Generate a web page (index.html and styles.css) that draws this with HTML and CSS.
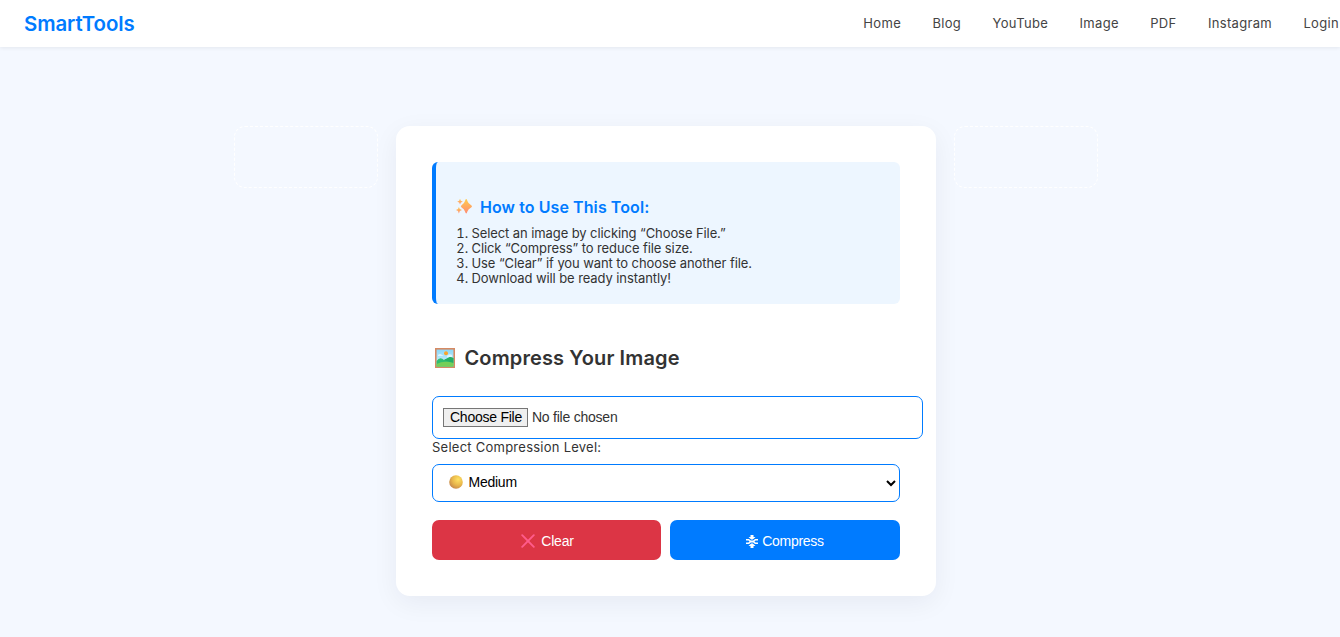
FILE: index.html
```html
<!DOCTYPE html>
<html lang="en">
<head>
<meta charset="utf-8">
<title>SmartTools</title>
<link rel="stylesheet" href="styles.css">
</head>
<body>
<header class="topbar">
  <div class="brand">SmartTools</div>
  <nav class="nav"><a>Home</a><a>Blog</a><a>YouTube</a><a>Image</a><a>PDF</a><a>Instagram</a><a>Login</a></nav>
</header>
<main class="layout">
  <aside class="slot"></aside>
  <section class="card">
    <div class="howto">
      <h3 class="howto-title">
        <svg class="sparkles" viewBox="0 0 18 18"><defs><linearGradient id="sp" x1="0" y1="0" x2="0" y2="1"><stop offset="0" stop-color="#ffcc4d"/><stop offset="1" stop-color="#ff8b72"/></linearGradient></defs><g fill="url(#sp)"><path d="M10.2 1Q11 1 11.4 3Q12.2 5.8 15.2 7.2Q17 8.3 15.2 9.4Q12.2 10.8 11.4 13.6Q10.2 17.4 9 13.6Q8.2 10.8 5.6 9.4Q4 8.3 5.6 7.2Q8.2 5.8 9 3Q9.4 1 10.2 1Z"/><path d="M4 .8 4.8 2.8 6.8 3.7 4.8 4.6 4 6.6 3.2 4.6 1.2 3.7 3.2 2.8Z"/><path d="M2.9 9 3.8 11.1 6 12.1 3.8 13.1 2.9 15.4 2 13.1 0 12.1 2 11.1Z"/></g></svg>
        <span>How to Use This Tool:</span>
      </h3>
      <ol class="steps">
        <li>Select an image by clicking “Choose File.”</li>
        <li>Click “Compress” to reduce file size.</li>
        <li>Use “Clear” if you want to choose another file.</li>
        <li>Download will be ready instantly!</li>
      </ol>
    </div>
    <h2 class="title">
      <svg class="picture" viewBox="0 0 20 20"><defs><linearGradient id="sky" x1="0" y1="0" x2="0" y2="1"><stop offset="0" stop-color="#8dd8f8"/><stop offset="1" stop-color="#d6f3fa"/></linearGradient></defs><path fill="#d68a63" d="M0 0h20v20H0z"/><path fill="url(#sky)" d="M1.6 1.6h16.8v16.8H1.6z"/><circle cx="11" cy="5.3" r="2" fill="#f9a52b"/><path fill="#fff" opacity=".6" d="M3 7q2-2 4 0l2 1H3zM12 8q2-3 5-1v2h-5z"/><path fill="#2fbd70" d="M1.6 13Q5 8 9 12L15 9l3.4 1v8.4H1.6z"/><path fill="#24ad65" d="M9 12 15 9l3.4 1v5z"/><path fill="#75cf58" d="M1.6 16q7.4-4 16.8-1v3.4H1.6z"/></svg>
      <span>Compress Your Image</span>
    </h2>
    <input class="file" type="file">
    <label class="label" for="level">Select Compression Level:</label>
    <div class="select-wrap">
      <select class="select" id="level"><option>Medium</option></select>
      <svg class="dot" viewBox="0 0 14 14"><defs><radialGradient id="gold" cx=".66" cy=".32" r=".75"><stop offset="0" stop-color="#ffe263"/><stop offset=".55" stop-color="#e9b84c"/><stop offset="1" stop-color="#c6874a"/></radialGradient></defs><circle cx="7" cy="7" r="6.8" fill="url(#gold)"/></svg>
    </div>
    <div class="actions">
      <button class="btn btn-clear"><svg class="cross" viewBox="0 0 14 14"><path d="M1.2 1.2 12.8 12.8M12.8 1.2 1.2 12.8" stroke="#ff5c8c" stroke-width="1.9" stroke-linecap="round"/></svg><span>Clear</span></button>
      <button class="btn btn-compress"><svg class="squeeze" viewBox="0 0 12 13"><g fill="#fff"><path d="M4.5 0h3v2H9.5L6.8 4.6H5.2L2.5 2h2zM4.5 13h3v-2H9.5L6.8 8.4H5.2L2.5 11h2z"/><path d="M0 3.9h3L4.8 5.4h2.4L9 3.9h3v1.6H9.6L8.4 6.5l1.2 1H12v1.6H9L7.2 7.6H4.8L3 9.1H0V7.5h2.4l1.2-1-1.2-1H0z"/></g></svg><span>Compress</span></button>
    </div>
  </section>
  <aside class="slot"></aside>
</main>
</body>
</html>
```
FILE: styles.css
```css
* { box-sizing: border-box; }
body { margin: 0; height: 637px; overflow: hidden; background: #f4f8ff; color: #333; font-family: Inter, "Liberation Sans", sans-serif; font-size: 13px; }
.topbar { position: relative; display: flex; justify-content: space-between; align-items: center; height: 47px; padding: 0 1px 0 24px; background: #fff; box-shadow: 0 1px 4px rgba(0,0,0,.07); }
.brand { color: #007bff; font-size: 20.4px; font-weight: 600; letter-spacing: -.1px; }
.nav { display: flex; gap: 31.4px; padding-bottom: 2px; color: #444; font-size: 13px; letter-spacing: .32px; }
.layout { display: flex; justify-content: center; align-items: flex-start; gap: 18px; padding: 79px 8px 0 0; }
.slot { width: 144px; height: 62px; border: 1px dashed #fff; border-radius: 11px; }
.card { width: 540px; height: 470px; padding: 36px; background: #fff; border-radius: 14px; box-shadow: 0 7px 27px rgba(0,0,50,.06); }
.howto { height: 142px; padding: 35px 20px 0; background: #edf6ff; border-left: 4px solid #007bff; border-radius: 6px; }
.howto-title { display: flex; align-items: center; gap: 6px; height: 20px; margin: 0 0 9px; color: #007bff; font-size: 16px; font-weight: 600; letter-spacing: .08px; }
.sparkles { width: 18px; height: 18px; }
.steps { margin: 0; padding: 0 0 0 15.5px; font-size: 13px; line-height: 15px; letter-spacing: -.09px; }
.title { display: flex; align-items: center; gap: 9.5px; height: 26px; margin: 41px 0 25px 3px; font-size: 20px; font-weight: 600; letter-spacing: .12px; }
.picture { width: 20px; height: 20px; }
.file { display: block; width: 491px; height: 43px; padding: 11px 10px; border: 1px solid #007bff; border-radius: 7px; font-family: "Liberation Sans", sans-serif; font-size: 14px; letter-spacing: -.23px; color: #333; }
.file::file-selector-button { height: 19px; margin: 0 4px 0 0; padding: 0 5px 1px 6px; border: 1px solid #767676; border-radius: 0; background: #efefef; color: #000; font: 14px "Liberation Sans", sans-serif; letter-spacing: -.25px; }
.label { display: block; height: 25px; line-height: 17px; font-size: 13px; letter-spacing: .25px; }
.select-wrap { position: relative; height: 38px; }
.select { width: 468px; height: 38px; padding: 0 0 2px 31.5px; border: 1px solid #007bff; border-radius: 7px; background: #fff; color: #000; font: 14px "Liberation Sans", sans-serif; letter-spacing: -.25px; }
.dot { position: absolute; left: 16.5px; top: 11px; width: 14px; height: 14px; }
.actions { display: grid; grid-template-columns: 229px 230px; gap: 9px; margin-top: 18px; }
.btn { display: flex; justify-content: center; align-items: center; height: 40px; padding: 2px 0 0; border: 0; border-radius: 7px; color: #fff; font: 14px "Liberation Sans", sans-serif; letter-spacing: -.23px; }
.btn-clear { gap: 6px; padding-left: 2px; background: #dc3545; }
.btn-compress { gap: 4px; background: #007bff; letter-spacing: -.3px; }
.cross { width: 14px; height: 14px; }
.squeeze { width: 12px; height: 13px; }
```
